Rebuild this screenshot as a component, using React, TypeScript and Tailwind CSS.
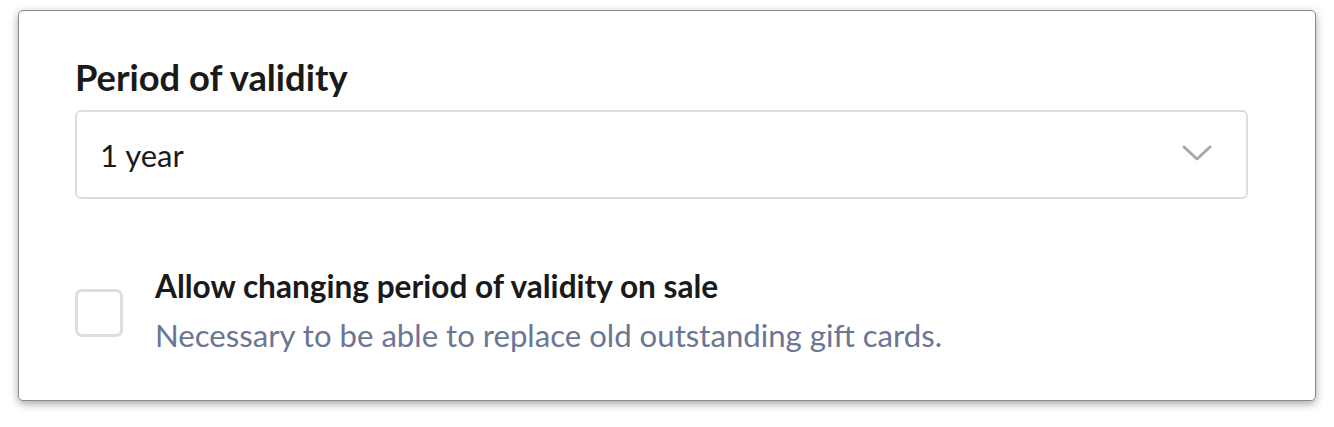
export default function App() {
  return (
    <div className="w-[1334px] h-[427px] bg-white pt-[10px] pl-[18px]" style={{ fontFamily: 'Lato, "Noto Sans", sans-serif' }}>
      <div className="w-[1298px] h-[391px] bg-white border border-[#8a8a8a] rounded-[5px] shadow-[0_3px_8px_rgba(0,0,0,0.35)] pl-[56px] pr-[67px] pt-[44px]">
        <div className="text-[36.3px] leading-[44px] font-bold text-[#1a1a1a]">Period of validity</div>
        <div className="mt-[11px] h-[89px] border-2 border-[#dddddd] rounded-[6px] flex items-center justify-between pl-[23px] pr-[34px]">
          <span className="text-[31px] leading-[40px] text-[#1a1a1a]">1 year</span>
          <svg width="30" height="17" viewBox="0 0 30 17" fill="none" className="mt-[-2px]">
            <path d="M2 2 L15 14 L28 2" stroke="#a8a8a8" strokeWidth="3" strokeLinecap="round" strokeLinejoin="round" />
          </svg>
        </div>
        <div className="mt-[67px] flex items-start gap-[32px]">
          <div className="w-[48px] h-[48px] border-[3px] border-[#dddddd] rounded-[7px] mt-[23px] shrink-0" />
          <div className="flex flex-col">
            <span className="text-[31.6px] leading-[40px] font-bold text-[#1a1a1a]">Allow changing period of validity on sale</span>
            <span className="text-[31.15px] leading-[40px] text-[#6b7594] mt-[9px]">Necessary to be able to replace old outstanding gift cards.</span>
          </div>
        </div>
      </div>
    </div>
  );
}
